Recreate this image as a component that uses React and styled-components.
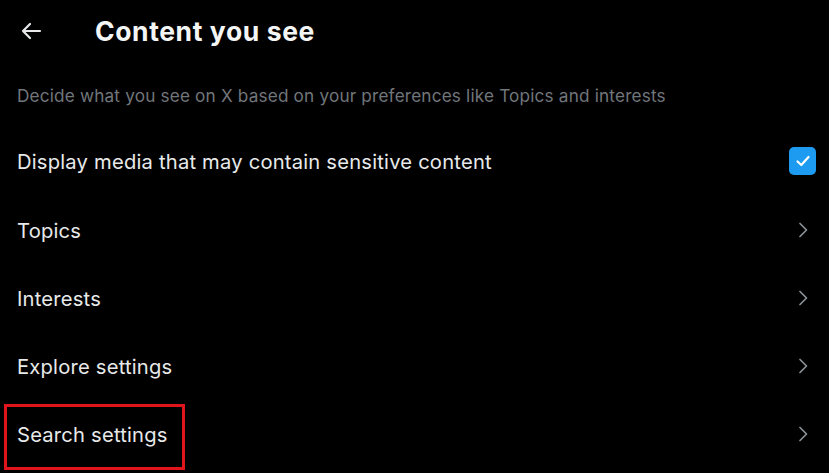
import React from "react";
import styled, { createGlobalStyle } from "styled-components";

const Global = createGlobalStyle`
  html, body { margin: 0; padding: 0; background: #000; }
  body { font-family: Inter, "Noto Sans", "Liberation Sans", sans-serif; color: #e7e9ea; }
  #root { width: 829px; height: 473px; overflow: hidden; background: #000; }
`;

const Page = styled.div`
  display: flex;
  flex-direction: column;
  width: 829px;
`;

const Header = styled.header`
  display: flex;
  align-items: center;
  height: 62px;
  padding-left: 20px;
`;

const BackButton = styled.button`
  display: flex;
  align-items: center;
  justify-content: center;
  width: 22px;
  height: 22px;
  padding: 0;
  border: none;
  background: none;
  color: #e7e9ea;
  margin-right: 53px;
`;

const Title = styled.h1`
  margin: 0;
  font-size: 26.5px;
  font-weight: 700;
  letter-spacing: 0.6px;
  color: #f4f5f5;
`;

const Subtitle = styled.p`
  margin: 0;
  height: 64px;
  display: flex;
  align-items: center;
  padding: 2px 0 0 17px;
  box-sizing: border-box;
  font-size: 17.2px;
  letter-spacing: 0.17px;
  color: #71767b;
`;

const Row = styled.div`
  position: relative;
  display: flex;
  align-items: center;
  justify-content: space-between;
  height: ${(p) => p.$h || 68}px;
  padding: 0 13px 0 17px;
  box-sizing: border-box;
`;

const Label = styled.span`
  font-size: 20.2px;
  letter-spacing: 0.2px;
  color: #e7e9ea;
`;

const Checkbox = styled.span`
  display: flex;
  align-items: center;
  justify-content: center;
  width: 27px;
  height: 28px;
  border-radius: 5px;
  background: #1d9bf0;
`;

const Chevron = styled.svg`
  width: 20px;
  height: 20px;
  color: #8b9196;
  margin-right: 3px;
`;

const Highlight = styled.span`
  position: absolute;
  left: 4px;
  top: 4px;
  width: 181px;
  height: 66px;
  border: 3px solid #e0141b;
  box-sizing: border-box;
  pointer-events: none;
`;

const ChevronIcon = () => (
  <Chevron viewBox="0 0 20 20" fill="none">
    <path d="M7 3.5 L13.5 10 L7 16.5" stroke="currentColor" strokeWidth="1.7" strokeLinecap="round" strokeLinejoin="round" />
  </Chevron>
);

const items = ["Topics", "Interests", "Explore settings", "Search settings"];

export default function App() {
  return (
    <Page>
      <Global />
      <Header>
        <BackButton aria-label="Back">
          <svg width="22" height="22" viewBox="0 0 22 22" fill="none">
            <path d="M20 11 H3 M10 4 L3 11 L10 18" stroke="currentColor" strokeWidth="2.2" strokeLinecap="round" strokeLinejoin="round" />
          </svg>
        </BackButton>
        <Title>Content you see</Title>
      </Header>
      <Subtitle>Decide what you see on X based on your preferences like Topics and interests</Subtitle>
      <Row $h={70}>
        <Label>Display media that may contain sensitive content</Label>
        <Checkbox>
          <svg width="16" height="16" viewBox="0 0 16 16" fill="none">
            <path d="M2.5 8.5 L6.3 12 L13.5 4" stroke="#fff" strokeWidth="2.2" strokeLinecap="round" strokeLinejoin="round" />
          </svg>
        </Checkbox>
      </Row>
      {items.map((t, i) => (
        <Row key={t}>
          <Label>{t}</Label>
          <ChevronIcon />
          {i === items.length - 1 && <Highlight />}
        </Row>
      ))}
    </Page>
  );
}
